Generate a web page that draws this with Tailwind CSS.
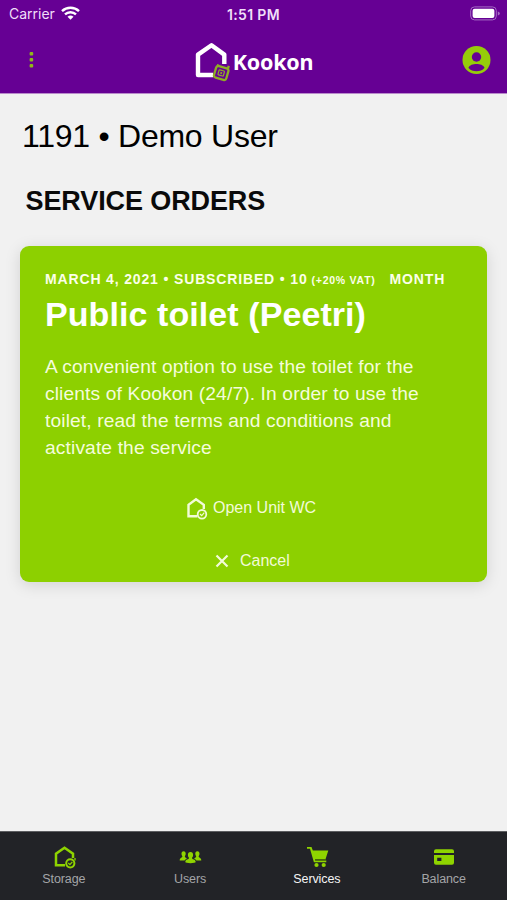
<!DOCTYPE html>
<html lang="en">
<head>
<meta charset="utf-8">
<title>Kookon</title>
<script src="https://cdn.jsdelivr.net/npm/@tailwindcss/browser@4"></script>
</head>
<body class="bg-[#f1f1f1]">
<div class="flex h-[900px] w-[507px] flex-col overflow-hidden bg-[#f1f1f1] font-['Liberation_Sans',Arial,sans-serif] text-black">
  <header class="flex h-[94px] shrink-0 flex-col border-b border-[#b98acb] bg-[#660094]">
    <div class="grid h-[27px] grid-cols-[1fr_80px_1fr] items-center pr-[6px] pl-[9px] font-[Inter,sans-serif] text-[14px] text-[#f0dff8]">
      <div class="flex items-center gap-[6px]"><span>Carrier</span>
        <svg class="mb-[2px] h-[14px] w-[19px]" viewBox="0 0 19 14" fill="none" stroke="#fff" stroke-width="2.4"><path d="M1 5.2a12.3 12.3 0 0 1 17 0M4 8.4a8 8 0 0 1 11 0"/><path d="M6.5 10.8a4.4 4.4 0 0 1 6 0l-3 3z" fill="#fff" stroke="none"/></svg>
      </div>
      <span class="mt-[1px] mr-[3px] text-center text-[14px] font-semibold tracking-[0.35px] whitespace-nowrap">1:51 PM</span>
      <svg class="h-[15px] w-[31px] justify-self-end" viewBox="0 0 31 15"><rect x=".7" y=".9" width="25.6" height="13" rx="3.8" fill="none" stroke="#a56bc4"/><rect x="2.6" y="2.7" width="21.8" height="9.4" rx="2" fill="#fff"/><path d="M27.8 5.4q2 .5 2 2t-2 2z" fill="#a56bc4"/></svg>
    </div>
    <div class="flex h-[66px] items-center justify-between pr-[16px] pl-[28px]">
      <svg class="h-[18px] w-[7px]" viewBox="0 0 7 18" fill="#8fb81a"><rect x="1.6" y="1" width="3.6" height="3.6" rx="1"/><rect x="1.6" y="7" width="3.6" height="3.6" rx="1"/><rect x="1.6" y="13" width="3.6" height="3.6" rx="1"/></svg>
      <div class="flex items-center gap-[3px] pt-[3px] pl-[11px]">
        <svg class="h-[40px] w-[35px]" viewBox="0 0 35 40" fill="none"><path d="M18 33H3V12.600L16.500 3.300l12.800 9.300V22" stroke="#fff" stroke-width="4.400" stroke-linejoin="round"/><g transform="rotate(16 26 31)" stroke="#8fae24" stroke-width="2.300"><rect x="19.800" y="25" width="12.800" height="12" rx="2.400" fill="#660094"/><path d="M21 25v-1.500M31.500 25v-3"/><rect x="23.400" y="28.300" width="5.600" height="5.200" rx=".8" stroke-width="1.200"/><path d="M25.400 30h1.600v2h-1.600z" fill="#8fae24" stroke="none"/></g></svg>
        <span class="font-['Noto_Sans',sans-serif] text-[21.5px] font-bold leading-[24px] tracking-[-0.25px] text-white">Kookon</span>
      </div>
      <svg class="h-[29px] w-[29px]" viewBox="0 0 29 29"><circle cx="14.5" cy="14" r="14" fill="#96cc0a"/><circle cx="14.5" cy="11" r="4.7" fill="#660094"/><path d="M6.400 21.800c1-2.900 4.700-3.900 8.100-3.900s7.100 1 8.100 3.900c-2 2.600-4.900 3.400-8.100 3.400s-6.100-.8-8.100-3.400z" fill="#660094"/></svg>
    </div>
  </header>
  <main class="flex-1 px-[20px] pt-[23px]">
    <h1 class="pl-[2px] text-[32px] leading-[38px] tracking-[-0.25px] whitespace-nowrap">1191 • Demo User</h1>
    <h2 class="mt-[30px] pl-[5.5px] text-[27px] leading-[32px] font-bold tracking-[-0.1px] whitespace-nowrap text-[#0a0a0a]">SERVICE ORDERS</h2>
    <section class="mt-[29px] h-[336px] rounded-[9px] bg-[#8dd000] px-[25px] pt-[24px] text-white shadow-[0_3px_16px_rgba(0,0,0,0.13)]">
      <div class="flex items-baseline text-[14px] leading-[18px] font-bold tracking-[0.85px] whitespace-nowrap text-[#fbffe9]"><span>MARCH 4, 2021 • SUBSCRIBED • 10</span><span class="ml-[4px] text-[10.5px] tracking-[0.75px]">(+20% VAT)</span><span class="ml-[14px]">MONTH</span></div>
      <h3 class="mt-[4px] text-[34px] leading-[42px] font-bold tracking-[0.08px] whitespace-nowrap">Public toilet (Peetri)</h3>
      <p class="mt-[18px] text-[19.2px] leading-[27px] tracking-[0.13px] whitespace-nowrap text-[#f4fcdc]">A convenient option to use the toilet for the<br>clients of Kookon (24/7). In order to use the<br>toilet, read the terms and conditions and<br>activate the service</p>
      <div class="mt-[35px] flex h-[24px] items-center pl-[141px] text-[16px] text-[#f2fbd8]">
        <svg class="mr-[5px] h-[23px] w-[22px]" viewBox="0 0 22 23" fill="none" stroke="#f2fbd8"><path d="M11.500 19.300H2.500V7.800L10 2.200l7.800 5.600V12" stroke-width="2.400"/><circle cx="16" cy="17.300" r="4.300" stroke-width="1.800"/><path d="m14 17 1.700 1.700 2.600-3" stroke-width="1.200"/></svg>
        <span>Open Unit WC</span>
      </div>
      <div class="mt-[29px] flex h-[24px] items-center pl-[170px] text-[16px] text-[#f2fbd8]">
        <svg class="mr-[11px] h-[14px] w-[14px]" viewBox="0 0 14 14" stroke="#f2fbd8" stroke-width="2.2"><path d="m1.500 1.500 11 11m0-11-11 11"/></svg>
        <span>Cancel</span>
      </div>
    </section>
  </main>
  <nav class="grid h-[69px] shrink-0 grid-cols-4 border-t border-[#5d5e61] bg-[#222327] text-[12.500px] leading-[16px] tracking-[-0.1px] text-[#a4a5a7]">
    <div class="flex flex-col items-center pt-[13px] pl-[1px]"><svg class="h-[24px] w-[24px]" viewBox="0 0 24 24" fill="none" stroke="#8fd400"><path d="M13 20.200H4V8.700l8.500-5.900 8.500 5.900V13" stroke-width="2.500"/><circle cx="18.300" cy="18.300" r="4.100" stroke-width="2"/><path d="m16.300 18 1.600 1.600 2.400-2.800M23 15.500V13" stroke-width="1.300"/></svg><span class="mt-[2px]">Storage</span></div>
    <div class="flex flex-col items-center pt-[13px]"><svg class="h-[24px] w-[24px]" viewBox="0 0 24 24" fill="#8fd400"><path d="M12.500 6.900c-1.800 0-2.600 1.200-2.600 2.800 0 1.500.5 2.500 1.100 3.100 0 2.200-3.500 1-3.700 4.300 0 .6 2.500 1.100 5.200 1.100s5.200-.5 5.200-1.100c-.2-3.300-3.700-2.100-3.700-4.300.6-.6 1.100-1.600 1.100-3.100 0-1.600-.8-2.800-2.600-2.800z"/><path d="M5.600 6.200c1.500 0 2.100 1 2.100 2.400 0 1.300-.4 2.100-.9 2.700 0 1.900 2 1.500 2 2.400-1.300.6-1.700 1-2.200 1.800H1.700c.1-3.400 2.700-2.300 2.700-4.200-.5-.6-.9-1.400-.9-2.700 0-1.400.6-2.400 2.100-2.400zM19.400 6.200c-1.500 0-2.100 1-2.100 2.400 0 1.300.4 2.100.9 2.700 0 1.900-2 1.500-2 2.400 1.300.6 1.700 1 2.200 1.800h4.900c-.1-3.400-2.700-2.300-2.700-4.200.5-.6.9-1.400.9-2.700 0-1.400-.6-2.400-2.100-2.400z"/></svg><span class="mt-[2px]">Users</span></div>
    <div class="flex flex-col items-center pt-[13px] text-[#f5f5f5]"><svg class="h-[24px] w-[24px]" viewBox="0 0 24 24"><path d="M2 2h4.500l1.300 3.500H23.300l-2.800 8.700H10l.3 1.300h11v1.700H8.900L5 3.800H2z" fill="#8fd400"/><path d="M10 14.900h11" stroke="#4b7300" stroke-width="1.200"/><circle cx="11.500" cy="20" r="2.100" fill="#8fd400"/><circle cx="18.700" cy="20" r="2.100" fill="#8fd400"/></svg><span class="mt-[2px]">Services</span></div>
    <div class="flex flex-col items-center pt-[13px]"><svg class="h-[24px] w-[24px]" viewBox="0 0 24 24" fill="#8fd400"><path d="M2 8V6.300a2 2 0 0 1 2-2h16a2 2 0 0 1 2 2V8z"/><path fill-rule="evenodd" d="M2 10h20v7.800a2 2 0 0 1-2 2H4a2 2 0 0 1-2-2zm3.200 2.800v3.200h4.200v-3.200z"/></svg><span class="mt-[2px]">Balance</span></div>
  </nav>
</div>
</body>
</html>
